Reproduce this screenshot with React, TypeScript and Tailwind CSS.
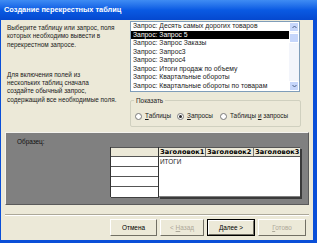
import React from "react";

const queries = [
  "Запрос: Десять самых дорогих товаров",
  "Запрос: Запрос 5",
  "Запрос: Запрос Заказы",
  "Запрос: Запрос3",
  "Запрос: Запрос4",
  "Запрос: Итоги продаж по объему",
  "Запрос: Квартальные обороты",
  "Запрос: Квартальные обороты по товарам",
  "Запрос: Продажи по годам",
];

const Radio = ({
  checked,
  width,
  children,
}: {
  checked?: boolean;
  width: string;
  children: React.ReactNode;
}) => (
  <div className={`${width} flex items-center gap-[3px] whitespace-nowrap`}>
    <span className="w-[7px] h-[7px] shrink-0 rounded-full border border-[#7a7a7a] bg-white flex items-center justify-center">
      {checked && <span className="w-[3px] h-[3px] rounded-full bg-[#2a2a2a]" />}
    </span>
    <span>{children}</span>
  </div>
);

const Button = ({
  children,
  disabled,
  primary,
  width,
}: {
  children: React.ReactNode;
  disabled?: boolean;
  primary?: boolean;
  width: string;
}) => (
  <div className={`${width} h-[17px] ${primary ? "border border-black" : ""}`}>
    <div className="w-full h-full border-t border-l border-white border-r border-b border-r-[#716f64] border-b-[#716f64] bg-[#ece9d8] flex items-center justify-center">
      <span className={disabled ? "text-[#aca899]" : "text-black"}>{children}</span>
    </div>
  </div>
);

export default function App() {
  return (
    <div
      className="w-[317px] h-[243px] overflow-hidden flex flex-col bg-[#0a4fd8] text-[6.4px] leading-[8px] text-black"
      style={{ fontFamily: '"Liberation Sans", Arial, sans-serif' }}
    >
      {/* Title bar */}
      <div className="h-[20px] shrink-0 bg-gradient-to-b from-[#3f8cf3] via-[#0a5ae3] to-[#0548cf] flex items-center pl-[4px]">
        <span className="text-white font-bold text-[7.4px]">Создание перекрестных таблиц</span>
      </div>

      {/* Window body */}
      <div className="flex-1 ml-[1px] mr-[4px] mb-[3px] bg-[#ece9d8] flex flex-col">
        {/* Top area */}
        <div className="flex h-[111px] pt-[1px]">
          <div className="w-[129px] pl-[6px] pt-[3px] text-[#1a1a1a]">
            <p className="leading-[8.3px]">
              Выберите таблицу или запрос, поля
              <br />
              которых необходимо вывести в
              <br />
              перекрестном запросе.
            </p>
            <p className="mt-[22px] leading-[8.3px]">
              Для включения полей из
              <br />
              нескольких таблиц сначала
              <br />
              создайте обычный запрос,
              <br />
              содержащий все необходимые поля.
            </p>
          </div>

          <div className="w-[172px] flex flex-col">
            {/* List box */}
            <div className="w-[170px] h-[71px] border border-[#7f9db9] bg-white flex overflow-hidden">
              <div className="flex-1 overflow-hidden text-[6.8px]">
                {queries.map((q, i) => (
                  <div
                    key={q}
                    className={`h-[8.5px] leading-[8.5px] pl-[2px] whitespace-nowrap ${
                      i === 1 ? "bg-black text-white" : "text-[#1a1a1a]"
                    }`}
                  >
                    {q}
                  </div>
                ))}
              </div>
              <div className="w-[10px] bg-[#f3f5fb] flex flex-col justify-between">
                <div className="h-[10px] bg-[#c6d6fb] border border-white flex items-center justify-center">
                  <svg width="5" height="4" viewBox="0 0 5 4">
                    <path d="M0.5 3 L2.5 1 L4.5 3" fill="none" stroke="#4d6185" strokeWidth="1" />
                  </svg>
                </div>
                <div className="h-[10px] mb-auto bg-[#c6d6fb] border border-white mt-[1px]" />
                <div className="h-[10px] bg-[#c6d6fb] border border-white flex items-center justify-center">
                  <svg width="5" height="4" viewBox="0 0 5 4">
                    <path d="M0.5 1 L2.5 3 L4.5 1" fill="none" stroke="#4d6185" strokeWidth="1" />
                  </svg>
                </div>
              </div>
            </div>

            {/* Group box */}
            <div className="relative mt-[8px] w-[171px] h-[27px] border border-[#d0d0bf] rounded-[2px] flex items-end pb-[6px] pl-[4px] text-[#1a1a1a]">
              <span className="absolute -top-[4px] left-[3px] px-[2px] bg-[#ece9d8] leading-[7px]">Показать</span>
              <Radio width="w-[42px]">
                <span className="underline">Т</span>аблицы
              </Radio>
              <Radio width="w-[43px]" checked>
                <span className="underline">З</span>апросы
              </Radio>
              <Radio width="w-[76px]">
                Таблицы <span className="underline">и</span> запросы
              </Radio>
            </div>
          </div>
        </div>

        {/* Sample panel */}
        <div className="mt-[1px] ml-[4px] w-[304px] h-[73px] bg-[#808080] border-t border-l border-[#f4f3ee] border-r border-b border-r-[#5a5a5a] border-b-[#5a5a5a] pt-[5px]">
          <div className="pl-[11px] text-[#111] h-[8px]">Образец:</div>
          <div className="flex mt-[1px] ml-[104px]">
            <div className="w-[48px] border-l border-[#333] shadow-[1px_1px_0_#404040]">
              <div className="h-[10px] bg-[#ece9d8] border-b border-t border-[#555]" />
              {[0, 1, 2, 3].map((r) => (
                <div key={r} className={`h-[10px] bg-white ${r < 3 ? "border-b border-[#555]" : ""}`} />
              ))}
            </div>
            <div className="w-[142px] border-l border-[#333] shadow-[2px_2px_0_#3a3a3a]">
              <div
                className="flex h-[10px] border-t border-b border-[#555] bg-[#ece9d8] font-bold text-[6.6px] leading-[9px]"
                style={{ fontFamily: '"DejaVu Sans", sans-serif' }}
              >
                <div className="w-[47px] border-r border-[#777] pl-[1px] whitespace-nowrap overflow-hidden">Заголовок1</div>
                <div className="w-[48px] border-r border-[#777] pl-[1px] whitespace-nowrap overflow-hidden">Заголовок2</div>
                <div className="flex-1 pl-[1px] whitespace-nowrap overflow-hidden">Заголовок3</div>
              </div>
              <div className="h-[39px] bg-white pl-[1px] text-[#222] leading-[9px]">ИТОГИ</div>
            </div>
          </div>
        </div>

        {/* Separator */}
        <div className="mt-[9px] ml-[4px] w-[304px] h-[2px] border-t border-[#aca899] border-b border-b-white" />

        {/* Buttons */}
        <div className="flex mt-[3px] ml-[109px] text-[6.4px]">
          <Button width="w-[47px]">Отмена</Button>
          <div className="ml-[3px]">
            <Button width="w-[44px]" disabled>
              &lt; <span className="underline">Н</span>азад
            </Button>
          </div>
          <div className="ml-[3px]">
            <Button width="w-[48px]" primary>
              <span className="underline">Д</span>алее &gt;
            </Button>
          </div>
          <div className="ml-[3px]">
            <Button width="w-[48px]" disabled>
              <span className="underline">Г</span>отово
            </Button>
          </div>
        </div>
      </div>
    </div>
  );
}
